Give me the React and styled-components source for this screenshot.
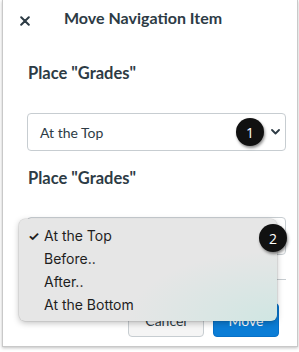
import styled, { createGlobalStyle } from 'styled-components';

const GlobalStyle = createGlobalStyle`
  html, body {
    margin: 0;
    padding: 0;
    background: #ffffff;
  }
  body {
    width: 299px;
    height: 352px;
    overflow: hidden;
    font-family: Lato, 'Liberation Sans', sans-serif;
    color: #2d3b45;
  }
`;

function CloseIcon() {
  return (
    <svg width='10' height='10' viewBox='0 0 10 10'>
      <path d='M1.2 1.2 L8.8 8.8 M8.8 1.2 L1.2 8.8' stroke='#2d3b45' strokeWidth='2' strokeLinecap='round' />
    </svg>
  );
}

function Chevron() {
  return (
    <svg width='9' height='6' viewBox='0 0 9 6'>
      <path d='M1 1 L4.5 4.5 L8 1' stroke='#2d3b45' strokeWidth='1.8' fill='none' strokeLinecap='round' strokeLinejoin='round' />
    </svg>
  );
}

function App() {
  const options = ['At the Top', 'Before..', 'After..', 'At the Bottom'];
  return (
    <>
      <GlobalStyle />
      <Panel>
        <Header>
          <CloseButton>
            <CloseIcon />
          </CloseButton>
          <Title>Move Navigation Item</Title>
        </Header>
        <Form>
          <Label>Place "Grades"</Label>
          <Select>
            <span>At the Top</span>
            <Chevron />
            <Badge $top={4} $left={208}>1</Badge>
          </Select>
          <Label $gap={17}>Place "Grades"</Label>
          <Select $gap={29}>
            <span>At the Top</span>
            <Menu>
              {options.map((o, i) => (
                <MenuItem key={o}>
                  {i === 0 && <Check>✓</Check>}
                  {o}
                </MenuItem>
              ))}
            </Menu>
            <Badge $top={6} $left={231}>2</Badge>
          </Select>
          <Divider />
        </Form>
        <Footer>
          <Button>Cancel</Button>
          <Button $primary>Move</Button>
        </Footer>
      </Panel>
    </>
  );
}

const Panel = styled.div`
  box-sizing: border-box;
  margin-left: 2px;
  width: 296px;
  height: 347px;
  background: #fff;
  border: 1px solid #c9c9c9;
  border-top: none;
  box-shadow: 0 1px 3px rgba(0, 0, 0, 0.25);
  display: flex;
  flex-direction: column;
`;

const Header = styled.div`
  height: 36px;
  display: flex;
  align-items: center;
`;

const CloseButton = styled.div`
  width: 10px;
  height: 10px;
  margin: 6px 0 0 17px;
  display: flex;
`;

const Title = styled.h1`
  margin: 0 0 0 34px;
  font-size: 16px;
  line-height: 36px;
  font-weight: 700;
`;

const Form = styled.div`
  padding: 0 11px 0 24px;
  display: flex;
  flex-direction: column;
`;

const Label = styled.h2`
  margin: ${(p) => p.$gap ?? 27}px 0 0 1px;
  font-size: 16.5px;
  line-height: 20px;
  font-weight: 700;
`;

const Select = styled.div`
  position: relative;
  box-sizing: border-box;
  margin-top: ${(p) => p.$gap ?? 30}px;
  height: 38px;
  border: 1px solid #c7cdd1;
  border-radius: 4px;
  background: #fff;
  display: flex;
  align-items: center;
  justify-content: space-between;
  padding: 0 5px 0 12px;
  font-size: 14px;
  color: #2d3b45;
  span {
    padding-top: 1px;
  }
`;

const Badge = styled.div`
  position: absolute;
  top: ${(p) => p.$top}px;
  left: ${(p) => p.$left}px;
  width: 28px;
  height: 28px;
  border-radius: 50%;
  background: #111;
  color: #fff;
  font-family: 'Open Sans', sans-serif;
  font-size: 14px;
  display: flex;
  align-items: center;
  justify-content: center;
  box-shadow: 1px 2px 3px rgba(0, 0, 0, 0.45);
  z-index: 3;
`;

const Menu = styled.div`
  position: absolute;
  top: 1px;
  left: -9px;
  width: 258px;
  box-sizing: border-box;
  padding: 5px 0;
  border-radius: 6px;
  background:
    radial-gradient(ellipse 150px 70px at 100% 100%, rgba(200, 230, 225, 0.75), rgba(225, 232, 230, 0) 100%),
    #e6e6e6;
  box-shadow: 0 2px 6px rgba(0, 0, 0, 0.25), 0 0 0 0.5px rgba(0, 0, 0, 0.12);
  z-index: 2;
`;

const MenuItem = styled.div`
  position: relative;
  height: 23px;
  line-height: 23px;
  padding-left: 25px;
  font-family: Inter, 'Liberation Sans', sans-serif;
  font-size: 14px;
  color: #1e1e1e;
`;

const Check = styled.span`
  position: absolute;
  left: 9px;
  font-size: 13px;
  font-weight: 700;
`;

const Divider = styled.div`
  margin-top: 24px;
  height: 1px;
  background: #c7cdd1;
`;

const Footer = styled.div`
  margin-top: 23px;
  padding-right: 18px;
  display: flex;
  justify-content: flex-end;
  gap: 9px;
`;

const Button = styled.div`
  box-sizing: border-box;
  height: 34px;
  width: ${(p) => (p.$primary ? 66 : 76)}px;
  border-radius: 4px;
  border: 1px solid ${(p) => (p.$primary ? '#0770c7' : '#c7cdd1')};
  background: ${(p) => (p.$primary ? '#0b7dd6' : '#f5f5f5')};
  color: ${(p) => (p.$primary ? '#fff' : '#2d3b45')};
  font-size: 14px;
  display: flex;
  align-items: center;
  justify-content: center;
`;

export default App;
